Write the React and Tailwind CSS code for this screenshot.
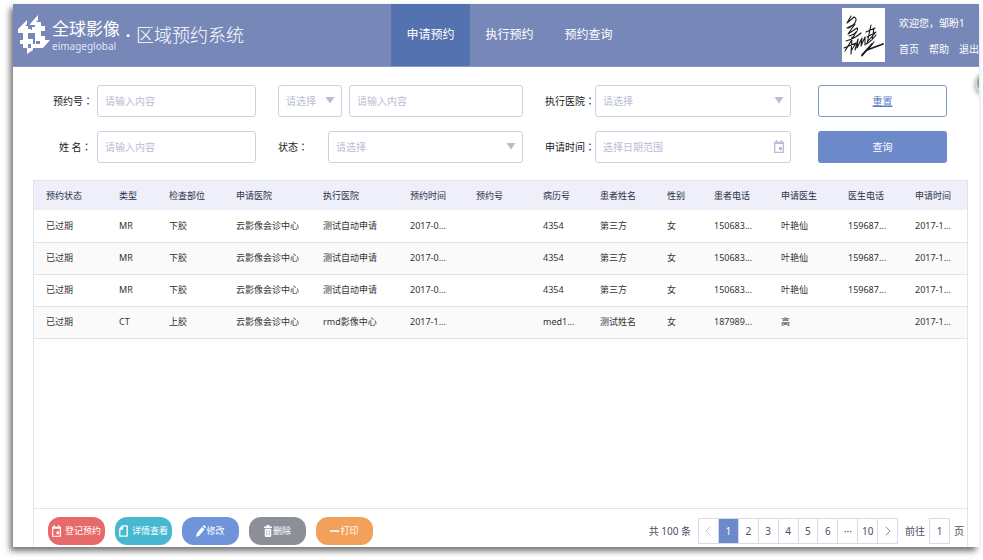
import React from "react";
import { ChevronLeft, ChevronRight } from "lucide-react";

const NAV = ["申请预约", "执行预约", "预约查询"];

const COLUMNS = [
  { name: "预约状态", width: "w-[73px]" },
  { name: "类型", width: "w-[50px]" },
  { name: "检查部位", width: "w-[67px]" },
  { name: "申请医院", width: "w-[87px]" },
  { name: "执行医院", width: "w-[87px]" },
  { name: "预约时间", width: "w-[66px]" },
  { name: "预约号", width: "w-[67px]" },
  { name: "病历号", width: "w-[57px]" },
  { name: "患者姓名", width: "w-[67px]" },
  { name: "性别", width: "w-[47px]" },
  { name: "患者电话", width: "w-[67px]" },
  { name: "申请医生", width: "w-[67px]" },
  { name: "医生电话", width: "w-[67px]" },
  { name: "申请时间", width: "w-[64px]" },
];

const MR_ROW = ["已过期", "MR", "下胶", "云影像会诊中心", "测试自动申请", "2017-0...", "", "4354", "第三方", "女", "150683...", "叶艳仙", "159687...", "2017-1..."];

const ROWS = [
  MR_ROW,
  MR_ROW,
  MR_ROW,
  ["已过期", "CT", "上胶", "云影像会诊中心", "rmd影像中心", "2017-1...", "", "med1...", "测试姓名", "女", "187989...", "高", "", "2017-1..."],
];

const PAGES = ["1", "2", "3", "4", "5", "6", "···", "10"];

const FIELD =
  "h-8 w-full min-w-0 appearance-none rounded-[3px] border border-[#cfd1e2] bg-white px-[7px] text-[10px] text-[#b9bdd3] placeholder:text-[#b9bdd3] outline-none";

function Logo() {
  return (
    <svg viewBox="0 0 32 40" className="h-10 w-8 shrink-0" fill="#fff" aria-hidden="true">
      <path d="M0 14 9 5V9L7 11H10V14H13V18H10V24H15V29H10V33H5V29H2V25H5V18H0Z" />
      <path d="M12 9 20 0V5L18 7H23V11H27V16H23V21H27V25H32L25 33H15V35L9 39V33H13V29H17V16H14V12H17V10H12Z" />
      <path d="M12 19h5v2h-5zM18 26h4v3h-4z" fill="#7788b8" />
      <path d="M10 15h7v3h-7z" />
    </svg>
  );
}

function Signature() {
  return (
    <svg
      viewBox="0 0 43 54"
      className="h-[54px] w-[43px] shrink-0 bg-white"
      fill="none"
      stroke="#181818"
      strokeWidth="1.1"
      strokeLinecap="round"
      strokeLinejoin="round"
      role="img"
      aria-label="签名"
    >
      <path d="M9 8 5 15 12 9C16 10 14 16 7 20L5 20 13 16 6 26 15 20C17 22 13 27 7 28" />
      <path d="M4 33C9 32 16 28 19 25M14 24C11 30 8 35 3 43M10 29 9 46M2 40 14 35 9 43" />
      <path d="M13 42 16 31 15 40 20 30 19 38 23 29 23 37" />
      <path d="M29 17 25 36M24 24 33 20M25 29 34 24 26 33M32 20 30 32M34 27C31 31 28 34 24 36" />
      <path d="M20 47 30 36 25 42 41 36" strokeWidth="1.8" />
      <path d="M32 34 20 48" />
    </svg>
  );
}

function Caret() {
  return (
    <svg viewBox="0 0 10 7" className="pointer-events-none absolute right-[7px] top-3 h-[7px] w-[10px]" fill="#b9bdd3" aria-hidden="true">
      <path d="M.5 0h9L5 6.500z" />
    </svg>
  );
}

function CalendarIcon({ className }) {
  return (
    <svg viewBox="0 0 10 13" className={className} fill="none" stroke="currentColor" aria-hidden="true">
      <path d="M.7 2.500h8.600v9.800H.7z" strokeWidth="1.3" />
      <path d="M.5 3h9" strokeWidth="2" />
      <path d="M2.500 0v3M7.500 0v3" strokeWidth="1.4" />
      <path d="M5 7h3v3H5z" fill="currentColor" stroke="none" />
    </svg>
  );
}

function PageIcon() {
  return (
    <svg viewBox="0 0 9 12" className="h-3 w-[9px]" fill="none" stroke="currentColor" strokeWidth="1.3" strokeLinejoin="round" aria-hidden="true">
      <path d="M3.500.8H8.200v10.400H.8V4z M3.500.8V4H.8" />
    </svg>
  );
}

function PencilIcon() {
  return (
    <svg viewBox="0 0 10 12" className="h-3 w-[10px]" fill="currentColor" aria-hidden="true">
      <path d="M0 12 1 8 6 2 8.500 4.300 3.400 10.500zM6.700 1.200 7.700.2Q9.800 0 9.900 2L9.100 3.500z" />
    </svg>
  );
}

function TrashIcon() {
  return (
    <svg viewBox="0 0 8 12" className="h-3 w-2" fill="currentColor" aria-hidden="true">
      <path d="M2.500 0h3v1.500H8V3H0V1.500h2.500zM.8 3.800h6.400v7.200L6.500 12h-5L.8 11z" />
      <path d="M2.800 5v5.500M5.200 5v5.500" stroke="#8d8f98" strokeWidth=".6" />
    </svg>
  );
}

function DashIcon() {
  return (
    <svg viewBox="0 0 9 12" className="h-3 w-[9px]" aria-hidden="true">
      <path d="M0 6h9" stroke="currentColor" strokeWidth="1.6" />
    </svg>
  );
}

const ACTIONS = [
  { label: "登记预约", color: "bg-[#e8696a]", gap: "gap-1", icon: <CalendarIcon className="h-3 w-[9px]" /> },
  { label: "详情查看", color: "bg-[#48b8d0]", gap: "gap-1", icon: <PageIcon /> },
  { label: "修改", color: "bg-[#7094da]", gap: "gap-0", icon: <PencilIcon /> },
  { label: "删除", color: "bg-[#8d8f98]", gap: "gap-px", icon: <TrashIcon /> },
  { label: "打印", color: "bg-[#f2a05a]", gap: "gap-px", icon: <DashIcon /> },
];

function Label({ htmlFor, children, className }) {
  return (
    <label htmlFor={htmlFor} className={`shrink-0 whitespace-nowrap text-[10px] text-[#222] ${className}`}>
      {children}
      <span className="font-['Noto_Sans_CJK_TC',sans-serif]">：</span>
    </label>
  );
}

function Select({ id, label, className }) {
  return (
    <div className={`relative ${className}`}>
      <select id={id} aria-label={label} className={FIELD}>
        <option>请选择</option>
      </select>
      <Caret />
    </div>
  );
}

function Header() {
  return (
    <header className="flex h-[63px] items-stretch border-b border-[#8b9ac4] bg-[#7788b8] text-white">
      <div className="flex w-[378px] shrink-0 items-center pl-[5px]">
        <Logo />
        <div className="ml-[2px] w-[68px] whitespace-nowrap">
          <div className="text-[17px] leading-[22px]">全球影像</div>
          <div className="text-[10px] leading-[12px] text-[#dfe5f5]">eimageglobal</div>
        </div>
        <span className="w-4 text-center text-[16px] font-bold">·</span>
        <h1 className="text-[18px] font-light">区域预约系统</h1>
      </div>
      <nav className="flex">
        {NAV.map((item, i) => (
          <a
            key={item}
            href="#"
            className={`flex w-[79px] items-center justify-center text-[12px] ${i === 0 ? "bg-[#5572b0]" : ""}`}
          >
            {item}
          </a>
        ))}
      </nav>
      <div className="ml-auto flex items-center gap-[14px]">
        <Signature />
        <div className="flex flex-col gap-[11px] whitespace-nowrap pt-[3px] text-[10px] leading-[15px]">
          <p>欢迎您，邹盼1</p>
          <div className="flex gap-[10px]">
            <a href="#">首页</a>
            <a href="#">帮助</a>
            <a href="#">退出</a>
          </div>
        </div>
      </div>
    </header>
  );
}

function Filters() {
  return (
    <form className="grid grid-cols-[203fr_245fr_246fr_134fr] gap-x-[22px] gap-y-[14px] pb-[17px] pl-10 pr-8 pt-[18px]">
      <div className="flex items-center">
        <Label htmlFor="booking" className="w-11">预约号</Label>
        <input id="booking" className={FIELD} placeholder="请输入内容" />
      </div>
      <div className="flex items-center gap-[7px]">
        <Select id="kind" label="查询类型" className="w-16 shrink-0" />
        <input aria-label="查询内容" className={FIELD} placeholder="请输入内容" />
      </div>
      <div className="flex items-center">
        <Label htmlFor="hospital" className="w-[50px]">执行医院</Label>
        <Select id="hospital" className="flex-1" />
      </div>
      <div className="pl-[5px]">
        <button type="reset" className="h-8 w-full rounded-[3px] border border-[#7f96cc] bg-white text-[10px] text-[#5f7fc6] underline">
          重置
        </button>
      </div>

      <div className="flex items-center">
        <Label htmlFor="name" className="w-11 pl-[6px]">姓 名</Label>
        <input id="name" className={FIELD} placeholder="请输入内容" />
      </div>
      <div className="flex items-center">
        <Label htmlFor="state" className="w-[50px]">状态</Label>
        <Select id="state" className="flex-1" />
      </div>
      <div className="flex items-center">
        <Label htmlFor="range" className="w-[50px]">申请时间</Label>
        <div className="relative flex-1">
          <input id="range" className={FIELD} placeholder="选择日期范围" />
          <CalendarIcon className="pointer-events-none absolute right-[7px] top-[9px] h-[13px] w-[10px] text-[#b9bdd3]" />
        </div>
      </div>
      <div className="pl-[5px]">
        <button type="button" className="h-8 w-full rounded-[3px] bg-[#6c8aca] text-[10px] text-white">
          查询
        </button>
      </div>
    </form>
  );
}

function Results() {
  return (
    <table className="w-full table-fixed border-collapse text-left text-[9px] text-[#333]">
      <thead>
        <tr className="h-[29px] bg-[#eeeff8] text-[#2b2f45]">
          {COLUMNS.map((c) => (
            <th key={c.name} className={`${c.width} whitespace-nowrap pl-3 font-normal`}>
              {c.name}
            </th>
          ))}
        </tr>
      </thead>
      <tbody>
        {ROWS.map((row, r) => (
          <tr key={r} className="h-8 border-b border-[#dfe2ec] even:bg-[#fafafa]">
            {row.map((cell, c) => (
              <td key={c} className="whitespace-nowrap pl-3">
                {cell}
              </td>
            ))}
          </tr>
        ))}
      </tbody>
    </table>
  );
}

function Pagination() {
  return (
    <div className="flex items-center text-[10px] text-[#4a4f63]">
      <span className="mr-[7px]">共 100 条</span>
      <div className="flex h-[26px] w-[200px] divide-x divide-[#d8dbe8] border border-[#d8dbe8]">
        <button type="button" aria-label="上一页" disabled className="flex flex-1 items-center justify-center text-[#c5c9d8]">
          <ChevronLeft size={16} strokeWidth={1.5} />
        </button>
        {PAGES.map((p) => (
          <button key={p} type="button" className={`min-w-0 flex-1 ${p === "1" ? "bg-[#6c8aca] text-white" : ""}`}>
            {p}
          </button>
        ))}
        <button type="button" aria-label="下一页" className="flex flex-1 items-center justify-center text-[#8a8fa5]">
          <ChevronRight size={16} strokeWidth={1.5} />
        </button>
      </div>
      <label htmlFor="page" className="ml-[7px]">前往</label>
      <input id="page" defaultValue="1" className="mx-1 h-[26px] w-[21px] border border-[#d8dbe8] text-center outline-none" />
      <span>页</span>
    </div>
  );
}

export default function App() {
  return (
    <div className="flex min-h-screen bg-white pb-[13px] pl-[13px] pr-1 pt-1 font-['Noto_Sans','Noto_Sans_CJK_SC',sans-serif]">
      <div className="relative flex min-w-0 flex-1 flex-col bg-white shadow-[-3px_4px_6px_rgba(0,0,0,0.55)]">
        <Header />
        <div className="pointer-events-none absolute right-0 top-[64px] h-10 w-2 overflow-hidden">
          <div className="ml-1 mt-[3px] size-6 rounded-full border-2 border-[#d5d8da] bg-[#8fa39c] shadow-[0_2px_4px_rgba(0,0,0,0.4)]" />
        </div>
        <Filters />
        <main className="ml-5 mr-[11px] flex flex-1 flex-col border-x border-t border-[#e0e2ec]">
          <div className="flex-1">
            <Results />
          </div>
          <footer className="flex items-center justify-between border-t border-[#e6e6ea] pb-[2px] pl-[14px] pr-[3px] pt-[8px]">
            <div className="flex gap-[10px]">
              {ACTIONS.map((a) => (
                <button
                  key={a.label}
                  type="button"
                  className={`flex h-7 w-[57px] items-center justify-center whitespace-nowrap rounded-xl text-[9px] text-white ${a.color} ${a.gap}`}
                >
                  {a.icon}
                  {a.label}
                </button>
              ))}
            </div>
            <Pagination />
          </footer>
        </main>
      </div>
    </div>
  );
}
